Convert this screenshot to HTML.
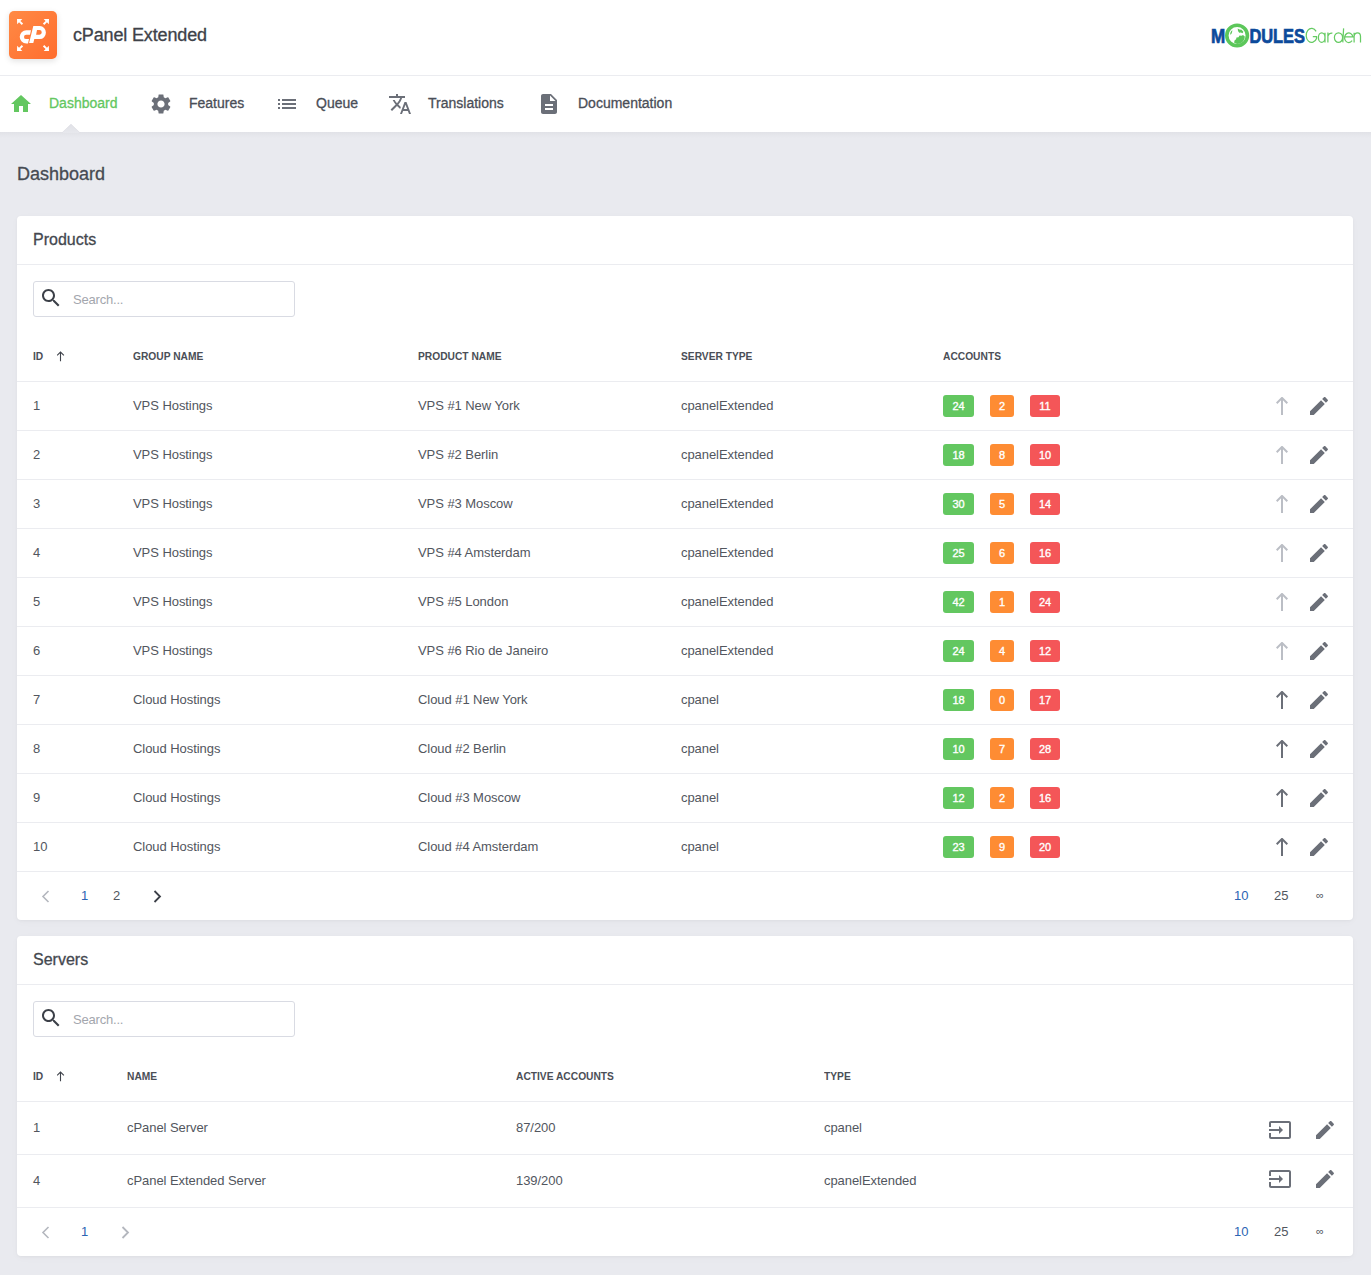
<!DOCTYPE html><html><head><meta charset="utf-8"><style>*{box-sizing:border-box;margin:0;padding:0}
html,body{width:1371px;height:1275px;overflow:hidden}
body{background:#e9eaef;font-family:"Liberation Sans",sans-serif;color:#4f535b;position:relative}
.abs{position:absolute;white-space:nowrap}
.ic{position:absolute;display:block}
#hdr{position:absolute;left:0;top:0;width:1371px;height:76px;background:#fff;border-bottom:1px solid #ebecf0}
#logo{position:absolute;left:9px;top:11px;width:48px;height:48px;border-radius:5px;background:linear-gradient(135deg,#ff8a45,#ff6d2e);box-shadow:0 2px 6px rgba(0,0,0,.12)}
#title{left:73px;top:25px;font-size:18px;color:#3e4249;letter-spacing:-0.15px}
#nav{position:absolute;left:0;top:76px;width:1371px;height:56px;background:#fff}
.nv{position:absolute;top:19px;font-size:14px;color:#4a4e57;white-space:nowrap}
#notch{position:absolute;left:60px;top:123px;z-index:3}
#nshadow{position:absolute;left:0;top:132px;width:1371px;height:6px;background:linear-gradient(rgba(0,0,20,.035),rgba(0,0,20,0))}
#ptitle{left:17px;top:164px;font-size:18px;color:#464a52}
.card{position:absolute;left:17px;width:1336px;background:#fff;border-radius:4px;box-shadow:0 1px 3px rgba(0,0,0,.04),0 2px 10px rgba(0,0,0,.025)}
.ch{position:absolute;left:0;top:0;width:100%;height:49px;border-bottom:1px solid #ebecf0}
.ct{left:16px;top:15px;font-size:16px;color:#44484f}
.search{position:absolute;left:16px;width:262px;height:36px;border:1px solid #d9dbe3;border-radius:3px}
.search .ph{left:39px;top:10px;font-size:13px;color:#a3a6ad;letter-spacing:-0.2px}
.th{top:134px;font-size:11px;font-weight:bold;color:#4a4e56;letter-spacing:0;transform:scaleX(0.93);transform-origin:0 0;text-transform:uppercase}
.row{position:absolute;left:0;width:100%;border-top:1px solid #ebecf0}
.td{font-size:13px;color:#52565e;letter-spacing:-0.06px}
.bd{position:absolute;top:13px;height:22px;border-radius:3px;color:#fff;font-size:11px;font-weight:normal;-webkit-text-stroke:0.35px #fff;text-align:center;line-height:22px}
.g{background:#63c760}.o{background:#fe8c33}.r{background:#f45658}
.ft{position:absolute;left:0;width:100%;height:49px;border-top:1px solid #ebecf0}
.pg{top:16px;font-size:13px;color:#52565e}
.blue{color:#2b65b3}
.inf{font-size:11px;top:17px}
#mg{position:absolute;left:1211px;top:18px}
.med{-webkit-text-stroke:0.3px currentColor}
</style></head><body>
<div id="hdr"><div id="logo"><svg style="position:absolute;left:0;top:0" width="48" height="48" viewBox="0 0 48 48"><g fill="#fff"><path id="ar" d="M8 8h5.3l-1.9 1.9 2.7 2.7-1.35 1.35-2.7-2.7-1.9 1.9z"/><use href="#ar" transform="translate(48 0) scale(-1 1)"/><use href="#ar" transform="translate(0 48) scale(1 -1)"/><use href="#ar" transform="translate(48 48) scale(-1 -1)"/><path d="M20.1 32.1L24.3 15.03H30.8A6.1 6.53 0 0 1 30.8 28.1H25.3L24.3 32.1ZM28 19H30.4A2.35 2.35 0 0 1 30.4 23.7H27.1Z" fill-rule="evenodd"/><path d="M22 19.24H17.33A6.63 6.63 0 0 0 17.33 32.5H19L20 28.1H17.2A2.2 2.2 0 0 1 17.2 23.7H21Z"/></g></svg></div><div id="title" class="abs med">cPanel Extended</div><svg id="mg" width="160" height="40" viewBox="0 0 160 40"><text x="0" y="24.5" font-family="Liberation Sans" font-weight="bold" font-size="19.3" fill="#0c4a9b" stroke="#0c4a9b" stroke-width="0.7" textLength="14.2" lengthAdjust="spacingAndGlyphs">M</text><text x="38.4" y="24.5" font-family="Liberation Sans" font-weight="bold" font-size="19.3" fill="#0c4a9b" stroke="#0c4a9b" stroke-width="0.7" textLength="55.6" lengthAdjust="spacingAndGlyphs">DULES</text><circle cx="26.1" cy="17.5" r="10.3" fill="#fff" stroke="#5cc75a" stroke-width="3.6"/><path fill="#5cc75a" d="M19.2 16.8C19 15 19.8 13 21.4 12.2L21 14.5L20.3 16ZM26.7 10.4L28.5 11.5L30.5 11.8L32.4 13.8L31.6 15.2L29.8 14.5L28.2 14.8L27 13ZM23 24.5L23.8 22L25 21.5L25.5 19.5L27.5 19.2L28.5 17.5L30.5 17.8L32 17L33.8 18.5L33.5 21L32 23.5L29.5 25.5L26 26Z"/><path fill="none" stroke="#66cb63" stroke-width="1.25" d="M105.1 13.4A5.45 7 0 1 0 105.54 20.5V18.5H101.8M107.4 19.6A3.3 4.8 0 1 0 114 19.6A3.3 4.8 0 1 0 107.4 19.6M114 14.8V24.4M116.9 24.4V14.5M116.9 18C117.8 15.8 119.5 15 121.4 15.2M123.4 19.6A4.1 4.8 0 1 0 131.6 19.6A4.1 4.8 0 1 0 123.4 19.6M132.6 10.4L131.8 24.4M133.6 18.8H141.9A4.2 4.8 0 1 0 141.1 22.7M143.1 14.8V24.4M143.1 18.5C143.5 15.5 145.5 14.8 146.5 14.8C148.5 14.8 149.5 16.2 149.5 18.5V24.4"/></svg></div>
<div id="nav">
<svg class="ic " style="left:9px;top:16px;width:24px;height:24px" viewBox="0 0 24 24"><path fill="#63c760" d="M10 20v-6h4v6h5v-8h3L12 3 2 12h3v8z"/></svg>
<div class="nv med" style="left:49px;color:#63c760">Dashboard</div>
<svg class="ic " style="left:149px;top:16px;width:24px;height:24px" viewBox="0 0 24 24"><path fill="#6b6f78" d="M19.14 12.94c.04-.3.06-.61.06-.94 0-.32-.02-.64-.07-.94l2.03-1.58c.18-.14.23-.41.12-.61l-1.92-3.32c-.12-.22-.37-.29-.59-.22l-2.39.96c-.5-.38-1.03-.7-1.62-.94l-.36-2.54c-.04-.24-.24-.41-.48-.41h-3.84c-.24 0-.43.17-.47.41l-.36 2.54c-.59.24-1.130.57-1.62.94l-2.39-.96c-.22-.08-.47 0-.59.22L2.74 8.87c-.12.21-.08.47.12.61l2.03 1.58c-.05.3-.09.63-.09.94s.02.64.07.94l-2.03 1.58c-.18.14-.23.41-.12.61l1.92 3.32c.12.22.37.29.59.22l2.39-.96c.5.38 1.03.7 1.62.94l.36 2.54c.05.24.24.41.48.41h3.84c.24 0 .44-.17.47-.41l.36-2.54c.59-.24 1.13-.56 1.62-.94l2.39.96c.22.08.47 0 .59-.22l1.92-3.32c.12-.22.07-.47-.12-.61l-2.01-1.58zM12 15.6c-1.98 0-3.6-1.62-3.6-3.6s1.62-3.6 3.6-3.6 3.6 1.62 3.6 3.6-1.62 3.6-3.6 3.6z"/></svg>
<div class="nv med" style="left:189px">Features</div>
<svg class="ic " style="left:275px;top:16px;width:24px;height:24px" viewBox="0 0 24 24"><path fill="#6b6f78" d="M3 13h2v-2H3v2zm0 4h2v-2H3v2zm0-8h2V7H3v2zm4 4h14v-2H7v2zm0 4h14v-2H7v2zM7 7v2h14V7H7z"/></svg>
<div class="nv med" style="left:316px">Queue</div>
<svg class="ic " style="left:388px;top:16px;width:24px;height:24px" viewBox="0 0 24 24"><path fill="#6b6f78" d="M12.87 15.07l-2.54-2.51.03-.03c1.74-1.94 2.98-4.17 3.71-6.53H17V4h-7V2H8v2H1v1.99h11.17C11.5 7.92 10.44 9.75 9 11.35 8.07 10.32 7.3 9.19 6.69 8h-2c.73 1.63 1.73 3.17 2.98 4.56l-5.09 5.02L4 19l5-5 3.11 3.11.76-2.04zM18.5 10h-2L12 22h2l1.12-3h4.75L21 22h2l-4.5-12zm-2.62 7l1.62-4.33L19.12 17h-3.24z"/></svg>
<div class="nv med" style="left:428px">Translations</div>
<svg class="ic " style="left:537px;top:16px;width:24px;height:24px" viewBox="0 0 24 24"><path fill="#6b6f78" d="M14 2H6c-1.1 0-1.99.9-1.99 2L4 20c0 1.1.89 2 1.99 2H18c1.1 0 2-.9 2-2V8l-6-6zm2 16H8v-2h8v2zm0-4H8v-2h8v2zm-3-5V3.5L18.5 9H13z"/></svg>
<div class="nv med" style="left:578px">Documentation</div>
</div><div id="nshadow"></div><svg id="notch" width="22" height="10" viewBox="0 0 22 10"><defs><linearGradient id="ng" x1="0" y1="0" x2="0" y2="1"><stop offset="0" stop-color="#e1e2e7"/><stop offset="1" stop-color="#e7e8ed"/></linearGradient></defs><path d="M1.3 10.5L11 1.2L20.7 10.5Z" fill="url(#ng)" stroke="#dfe0e5" stroke-width="0.8"/></svg>
<div id="ptitle" class="abs med">Dashboard</div>
<div class="card" style="top:216px;height:704px">
<div class="ch"><div class="ct abs med">Products</div></div>
<div class="search" style="top:65px"><svg class="ic " style="left:5px;top:4px;width:24px;height:24px" viewBox="0 0 24 24"><path fill="#3c4048" d="M15.5 14h-.79l-.28-.27C15.41 12.59 16 11.11 16 9.5 16 5.91 13.09 3 9.5 3S3 5.91 3 9.5 5.91 16 9.5 16c1.61 0 3.090-.59 4.23-1.57l.27.28v.79l5 4.99L20.49 19l-4.99-5zm-6 0C7.01 14 5 11.99 5 9.5S7.01 5 9.5 5 14 7.01 14 9.5 11.99 14 9.5 14z"/></svg><div class="ph abs">Search...</div></div>
<div class="thead">
<div class="th abs" style="left:16px">ID</div>
<div class="th abs" style="left:116px">Group Name</div>
<div class="th abs" style="left:401px">Product Name</div>
<div class="th abs" style="left:664px">Server Type</div>
<div class="th abs" style="left:926px">Accounts</div>
<svg class="ic" style="left:40px;top:135px;width:8px;height:11px" viewBox="0 0 8 11"><path d="M3.5 10.2V1M0.1 4.4L3.5 1L6.9 4.4" fill="none" stroke="#3f434b" stroke-width="1.1"/></svg>
</div>
<div class="row" style="top:165px;height:49px">
<div class="td abs" style="left:16px;top:16px">1</div>
<div class="td abs" style="left:116px;top:16px">VPS Hostings</div>
<div class="td abs" style="left:401px;top:16px">VPS #1 New York</div>
<div class="td abs" style="left:664px;top:16px">cpanelExtended</div>
<div class="bd g" style="left:926px;width:31px">24</div>
<div class="bd o" style="left:973px;width:24px">2</div>
<div class="bd r" style="left:1013px;width:30px">11</div>
<svg class="ic" style="left:1259px;top:15px;width:12px;height:18px" viewBox="0 0 12 18"><path d="M6.0 18V1.2M0.7 6.3L6.0 0.9L11.3 6.3" fill="none" stroke="#bbbec5" stroke-width="2"/></svg><svg class="ic " style="left:1290px;top:12px;width:24px;height:24px" viewBox="0 0 24 24"><path fill="#6b6f78" d="M3 17.25V21h3.75L17.81 9.94l-3.75-3.75L3 17.25zM20.71 7.04c.39-.39.39-1.02 0-1.41l-2.34-2.34c-.39-.39-1.02-.39-1.41 0l-1.83 1.83 3.75 3.75 1.83-1.83z"/></svg>
</div>
<div class="row" style="top:214px;height:49px">
<div class="td abs" style="left:16px;top:16px">2</div>
<div class="td abs" style="left:116px;top:16px">VPS Hostings</div>
<div class="td abs" style="left:401px;top:16px">VPS #2 Berlin</div>
<div class="td abs" style="left:664px;top:16px">cpanelExtended</div>
<div class="bd g" style="left:926px;width:31px">18</div>
<div class="bd o" style="left:973px;width:24px">8</div>
<div class="bd r" style="left:1013px;width:30px">10</div>
<svg class="ic" style="left:1259px;top:15px;width:12px;height:18px" viewBox="0 0 12 18"><path d="M6.0 18V1.2M0.7 6.3L6.0 0.9L11.3 6.3" fill="none" stroke="#bbbec5" stroke-width="2"/></svg><svg class="ic " style="left:1290px;top:12px;width:24px;height:24px" viewBox="0 0 24 24"><path fill="#6b6f78" d="M3 17.25V21h3.75L17.81 9.94l-3.75-3.75L3 17.25zM20.71 7.04c.39-.39.39-1.02 0-1.41l-2.34-2.34c-.39-.39-1.02-.39-1.41 0l-1.83 1.83 3.75 3.75 1.83-1.83z"/></svg>
</div>
<div class="row" style="top:263px;height:49px">
<div class="td abs" style="left:16px;top:16px">3</div>
<div class="td abs" style="left:116px;top:16px">VPS Hostings</div>
<div class="td abs" style="left:401px;top:16px">VPS #3 Moscow</div>
<div class="td abs" style="left:664px;top:16px">cpanelExtended</div>
<div class="bd g" style="left:926px;width:31px">30</div>
<div class="bd o" style="left:973px;width:24px">5</div>
<div class="bd r" style="left:1013px;width:30px">14</div>
<svg class="ic" style="left:1259px;top:15px;width:12px;height:18px" viewBox="0 0 12 18"><path d="M6.0 18V1.2M0.7 6.3L6.0 0.9L11.3 6.3" fill="none" stroke="#bbbec5" stroke-width="2"/></svg><svg class="ic " style="left:1290px;top:12px;width:24px;height:24px" viewBox="0 0 24 24"><path fill="#6b6f78" d="M3 17.25V21h3.75L17.81 9.94l-3.75-3.75L3 17.25zM20.71 7.04c.39-.39.39-1.02 0-1.41l-2.34-2.34c-.39-.39-1.02-.39-1.41 0l-1.83 1.83 3.75 3.75 1.83-1.83z"/></svg>
</div>
<div class="row" style="top:312px;height:49px">
<div class="td abs" style="left:16px;top:16px">4</div>
<div class="td abs" style="left:116px;top:16px">VPS Hostings</div>
<div class="td abs" style="left:401px;top:16px">VPS #4 Amsterdam</div>
<div class="td abs" style="left:664px;top:16px">cpanelExtended</div>
<div class="bd g" style="left:926px;width:31px">25</div>
<div class="bd o" style="left:973px;width:24px">6</div>
<div class="bd r" style="left:1013px;width:30px">16</div>
<svg class="ic" style="left:1259px;top:15px;width:12px;height:18px" viewBox="0 0 12 18"><path d="M6.0 18V1.2M0.7 6.3L6.0 0.9L11.3 6.3" fill="none" stroke="#bbbec5" stroke-width="2"/></svg><svg class="ic " style="left:1290px;top:12px;width:24px;height:24px" viewBox="0 0 24 24"><path fill="#6b6f78" d="M3 17.25V21h3.75L17.81 9.94l-3.75-3.75L3 17.25zM20.71 7.04c.39-.39.39-1.02 0-1.41l-2.34-2.34c-.39-.39-1.02-.39-1.41 0l-1.83 1.83 3.75 3.75 1.83-1.83z"/></svg>
</div>
<div class="row" style="top:361px;height:49px">
<div class="td abs" style="left:16px;top:16px">5</div>
<div class="td abs" style="left:116px;top:16px">VPS Hostings</div>
<div class="td abs" style="left:401px;top:16px">VPS #5 London</div>
<div class="td abs" style="left:664px;top:16px">cpanelExtended</div>
<div class="bd g" style="left:926px;width:31px">42</div>
<div class="bd o" style="left:973px;width:24px">1</div>
<div class="bd r" style="left:1013px;width:30px">24</div>
<svg class="ic" style="left:1259px;top:15px;width:12px;height:18px" viewBox="0 0 12 18"><path d="M6.0 18V1.2M0.7 6.3L6.0 0.9L11.3 6.3" fill="none" stroke="#bbbec5" stroke-width="2"/></svg><svg class="ic " style="left:1290px;top:12px;width:24px;height:24px" viewBox="0 0 24 24"><path fill="#6b6f78" d="M3 17.25V21h3.75L17.81 9.94l-3.75-3.75L3 17.25zM20.71 7.04c.39-.39.39-1.02 0-1.41l-2.34-2.34c-.39-.39-1.02-.39-1.41 0l-1.83 1.83 3.75 3.75 1.83-1.83z"/></svg>
</div>
<div class="row" style="top:410px;height:49px">
<div class="td abs" style="left:16px;top:16px">6</div>
<div class="td abs" style="left:116px;top:16px">VPS Hostings</div>
<div class="td abs" style="left:401px;top:16px">VPS #6 Rio de Janeiro</div>
<div class="td abs" style="left:664px;top:16px">cpanelExtended</div>
<div class="bd g" style="left:926px;width:31px">24</div>
<div class="bd o" style="left:973px;width:24px">4</div>
<div class="bd r" style="left:1013px;width:30px">12</div>
<svg class="ic" style="left:1259px;top:15px;width:12px;height:18px" viewBox="0 0 12 18"><path d="M6.0 18V1.2M0.7 6.3L6.0 0.9L11.3 6.3" fill="none" stroke="#bbbec5" stroke-width="2"/></svg><svg class="ic " style="left:1290px;top:12px;width:24px;height:24px" viewBox="0 0 24 24"><path fill="#6b6f78" d="M3 17.25V21h3.75L17.81 9.94l-3.75-3.75L3 17.25zM20.71 7.04c.39-.39.39-1.02 0-1.41l-2.34-2.34c-.39-.39-1.02-.39-1.41 0l-1.83 1.83 3.75 3.75 1.83-1.83z"/></svg>
</div>
<div class="row" style="top:459px;height:49px">
<div class="td abs" style="left:16px;top:16px">7</div>
<div class="td abs" style="left:116px;top:16px">Cloud Hostings</div>
<div class="td abs" style="left:401px;top:16px">Cloud #1 New York</div>
<div class="td abs" style="left:664px;top:16px">cpanel</div>
<div class="bd g" style="left:926px;width:31px">18</div>
<div class="bd o" style="left:973px;width:24px">0</div>
<div class="bd r" style="left:1013px;width:30px">17</div>
<svg class="ic" style="left:1259px;top:15px;width:12px;height:18px" viewBox="0 0 12 18"><path d="M6.0 18V1.2M0.7 6.3L6.0 0.9L11.3 6.3" fill="none" stroke="#6b6f78" stroke-width="2"/></svg><svg class="ic " style="left:1290px;top:12px;width:24px;height:24px" viewBox="0 0 24 24"><path fill="#6b6f78" d="M3 17.25V21h3.75L17.81 9.94l-3.75-3.75L3 17.25zM20.71 7.04c.39-.39.39-1.02 0-1.41l-2.34-2.34c-.39-.39-1.02-.39-1.41 0l-1.83 1.83 3.75 3.75 1.83-1.83z"/></svg>
</div>
<div class="row" style="top:508px;height:49px">
<div class="td abs" style="left:16px;top:16px">8</div>
<div class="td abs" style="left:116px;top:16px">Cloud Hostings</div>
<div class="td abs" style="left:401px;top:16px">Cloud #2 Berlin</div>
<div class="td abs" style="left:664px;top:16px">cpanel</div>
<div class="bd g" style="left:926px;width:31px">10</div>
<div class="bd o" style="left:973px;width:24px">7</div>
<div class="bd r" style="left:1013px;width:30px">28</div>
<svg class="ic" style="left:1259px;top:15px;width:12px;height:18px" viewBox="0 0 12 18"><path d="M6.0 18V1.2M0.7 6.3L6.0 0.9L11.3 6.3" fill="none" stroke="#6b6f78" stroke-width="2"/></svg><svg class="ic " style="left:1290px;top:12px;width:24px;height:24px" viewBox="0 0 24 24"><path fill="#6b6f78" d="M3 17.25V21h3.75L17.81 9.94l-3.75-3.75L3 17.25zM20.71 7.04c.39-.39.39-1.02 0-1.41l-2.34-2.34c-.39-.39-1.02-.39-1.41 0l-1.83 1.83 3.75 3.75 1.83-1.83z"/></svg>
</div>
<div class="row" style="top:557px;height:49px">
<div class="td abs" style="left:16px;top:16px">9</div>
<div class="td abs" style="left:116px;top:16px">Cloud Hostings</div>
<div class="td abs" style="left:401px;top:16px">Cloud #3 Moscow</div>
<div class="td abs" style="left:664px;top:16px">cpanel</div>
<div class="bd g" style="left:926px;width:31px">12</div>
<div class="bd o" style="left:973px;width:24px">2</div>
<div class="bd r" style="left:1013px;width:30px">16</div>
<svg class="ic" style="left:1259px;top:15px;width:12px;height:18px" viewBox="0 0 12 18"><path d="M6.0 18V1.2M0.7 6.3L6.0 0.9L11.3 6.3" fill="none" stroke="#6b6f78" stroke-width="2"/></svg><svg class="ic " style="left:1290px;top:12px;width:24px;height:24px" viewBox="0 0 24 24"><path fill="#6b6f78" d="M3 17.25V21h3.75L17.81 9.94l-3.75-3.75L3 17.25zM20.71 7.04c.39-.39.39-1.02 0-1.41l-2.34-2.34c-.39-.39-1.02-.39-1.41 0l-1.83 1.83 3.75 3.75 1.83-1.83z"/></svg>
</div>
<div class="row" style="top:606px;height:49px">
<div class="td abs" style="left:16px;top:16px">10</div>
<div class="td abs" style="left:116px;top:16px">Cloud Hostings</div>
<div class="td abs" style="left:401px;top:16px">Cloud #4 Amsterdam</div>
<div class="td abs" style="left:664px;top:16px">cpanel</div>
<div class="bd g" style="left:926px;width:31px">23</div>
<div class="bd o" style="left:973px;width:24px">9</div>
<div class="bd r" style="left:1013px;width:30px">20</div>
<svg class="ic" style="left:1259px;top:15px;width:12px;height:18px" viewBox="0 0 12 18"><path d="M6.0 18V1.2M0.7 6.3L6.0 0.9L11.3 6.3" fill="none" stroke="#6b6f78" stroke-width="2"/></svg><svg class="ic " style="left:1290px;top:12px;width:24px;height:24px" viewBox="0 0 24 24"><path fill="#6b6f78" d="M3 17.25V21h3.75L17.81 9.94l-3.75-3.75L3 17.25zM20.71 7.04c.39-.39.39-1.02 0-1.41l-2.34-2.34c-.39-.39-1.02-.39-1.41 0l-1.83 1.83 3.75 3.75 1.83-1.83z"/></svg>
</div>
<div class="ft" style="top:655px">
<svg class="ic" style="left:24px;top:18px;width:9px;height:13px" viewBox="0 0 9 13"><path d="M7.5 1L2 6.5 7.5 12" fill="none" stroke="#b4b7be" stroke-width="1.6"/></svg>
<div class="pg abs blue" style="left:64px">1</div>
<div class="pg abs " style="left:96px">2</div>
<svg class="ic" style="left:136px;top:18px;width:9px;height:13px" viewBox="0 0 9 13"><path d="M1.5 1L7 6.5 1.5 12" fill="none" stroke="#3c4048" stroke-width="1.8"/></svg>
<div class="pg abs blue" style="left:1217px">10</div>
<div class="pg abs" style="left:1257px">25</div>
<div class="pg abs inf" style="left:1299px">&#8734;</div>
</div>
</div>
<div class="card" style="top:936px;height:320px">
<div class="ch"><div class="ct abs med">Servers</div></div>
<div class="search" style="top:65px"><svg class="ic " style="left:5px;top:4px;width:24px;height:24px" viewBox="0 0 24 24"><path fill="#3c4048" d="M15.5 14h-.79l-.28-.27C15.41 12.59 16 11.11 16 9.5 16 5.91 13.09 3 9.5 3S3 5.91 3 9.5 5.91 16 9.5 16c1.61 0 3.090-.59 4.23-1.57l.27.28v.79l5 4.99L20.49 19l-4.99-5zm-6 0C7.01 14 5 11.99 5 9.5S7.01 5 9.5 5 14 7.01 14 9.5 11.99 14 9.5 14z"/></svg><div class="ph abs">Search...</div></div>
<div class="thead">
<div class="th abs" style="left:16px">ID</div>
<div class="th abs" style="left:110px">Name</div>
<div class="th abs" style="left:499px">Active Accounts</div>
<div class="th abs" style="left:807px">Type</div>
<svg class="ic" style="left:40px;top:135px;width:8px;height:11px" viewBox="0 0 8 11"><path d="M3.5 10.2V1M0.1 4.4L3.5 1L6.9 4.4" fill="none" stroke="#3f434b" stroke-width="1.1"/></svg>
</div>
<div class="row" style="top:165px;height:53px">
<div class="td abs" style="left:16px;top:18px">1</div>
<div class="td abs" style="left:110px;top:18px">cPanel Server</div>
<div class="td abs" style="left:499px;top:18px">87/200</div>
<div class="td abs" style="left:807px;top:18px">cpanel</div>
<svg class="ic " style="left:1251px;top:16px;width:24px;height:24px" viewBox="0 0 24 24"><path fill="#6b6f78" d="M21 3.01H3c-1.1 0-2 .9-2 2V9h2V4.99h18v14.03H3V15H1v4.01c0 1.1.9 1.98 2 1.98h18c1.1 0 2-.88 2-1.98v-14c0-1.11-.9-2-2-2zM11 16l4-4-4-4v3H1v2h10v3z"/></svg><svg class="ic " style="left:1296px;top:16px;width:24px;height:24px" viewBox="0 0 24 24"><path fill="#6b6f78" d="M3 17.25V21h3.75L17.81 9.94l-3.75-3.75L3 17.25zM20.71 7.04c.39-.39.39-1.02 0-1.41l-2.34-2.34c-.39-.39-1.02-.39-1.41 0l-1.83 1.83 3.75 3.75 1.83-1.83z"/></svg>
</div>
<div class="row" style="top:218px;height:53px">
<div class="td abs" style="left:16px;top:18px">4</div>
<div class="td abs" style="left:110px;top:18px">cPanel Extended Server</div>
<div class="td abs" style="left:499px;top:18px">139/200</div>
<div class="td abs" style="left:807px;top:18px">cpanelExtended</div>
<svg class="ic " style="left:1251px;top:12px;width:24px;height:24px" viewBox="0 0 24 24"><path fill="#6b6f78" d="M21 3.01H3c-1.1 0-2 .9-2 2V9h2V4.99h18v14.03H3V15H1v4.01c0 1.1.9 1.98 2 1.98h18c1.1 0 2-.88 2-1.98v-14c0-1.11-.9-2-2-2zM11 16l4-4-4-4v3H1v2h10v3z"/></svg><svg class="ic " style="left:1296px;top:12px;width:24px;height:24px" viewBox="0 0 24 24"><path fill="#6b6f78" d="M3 17.25V21h3.75L17.81 9.94l-3.75-3.75L3 17.25zM20.71 7.04c.39-.39.39-1.02 0-1.41l-2.34-2.34c-.39-.39-1.02-.39-1.41 0l-1.83 1.83 3.75 3.75 1.83-1.83z"/></svg>
</div>
<div class="ft" style="top:271px">
<svg class="ic" style="left:24px;top:18px;width:9px;height:13px" viewBox="0 0 9 13"><path d="M7.5 1L2 6.5 7.5 12" fill="none" stroke="#b4b7be" stroke-width="1.6"/></svg>
<div class="pg abs blue" style="left:64px">1</div>
<svg class="ic" style="left:104px;top:18px;width:9px;height:13px" viewBox="0 0 9 13"><path d="M1.5 1L7 6.5 1.5 12" fill="none" stroke="#b4b7be" stroke-width="1.8"/></svg>
<div class="pg abs blue" style="left:1217px">10</div>
<div class="pg abs" style="left:1257px">25</div>
<div class="pg abs inf" style="left:1299px">&#8734;</div>
</div>
</div>
</body></html>
